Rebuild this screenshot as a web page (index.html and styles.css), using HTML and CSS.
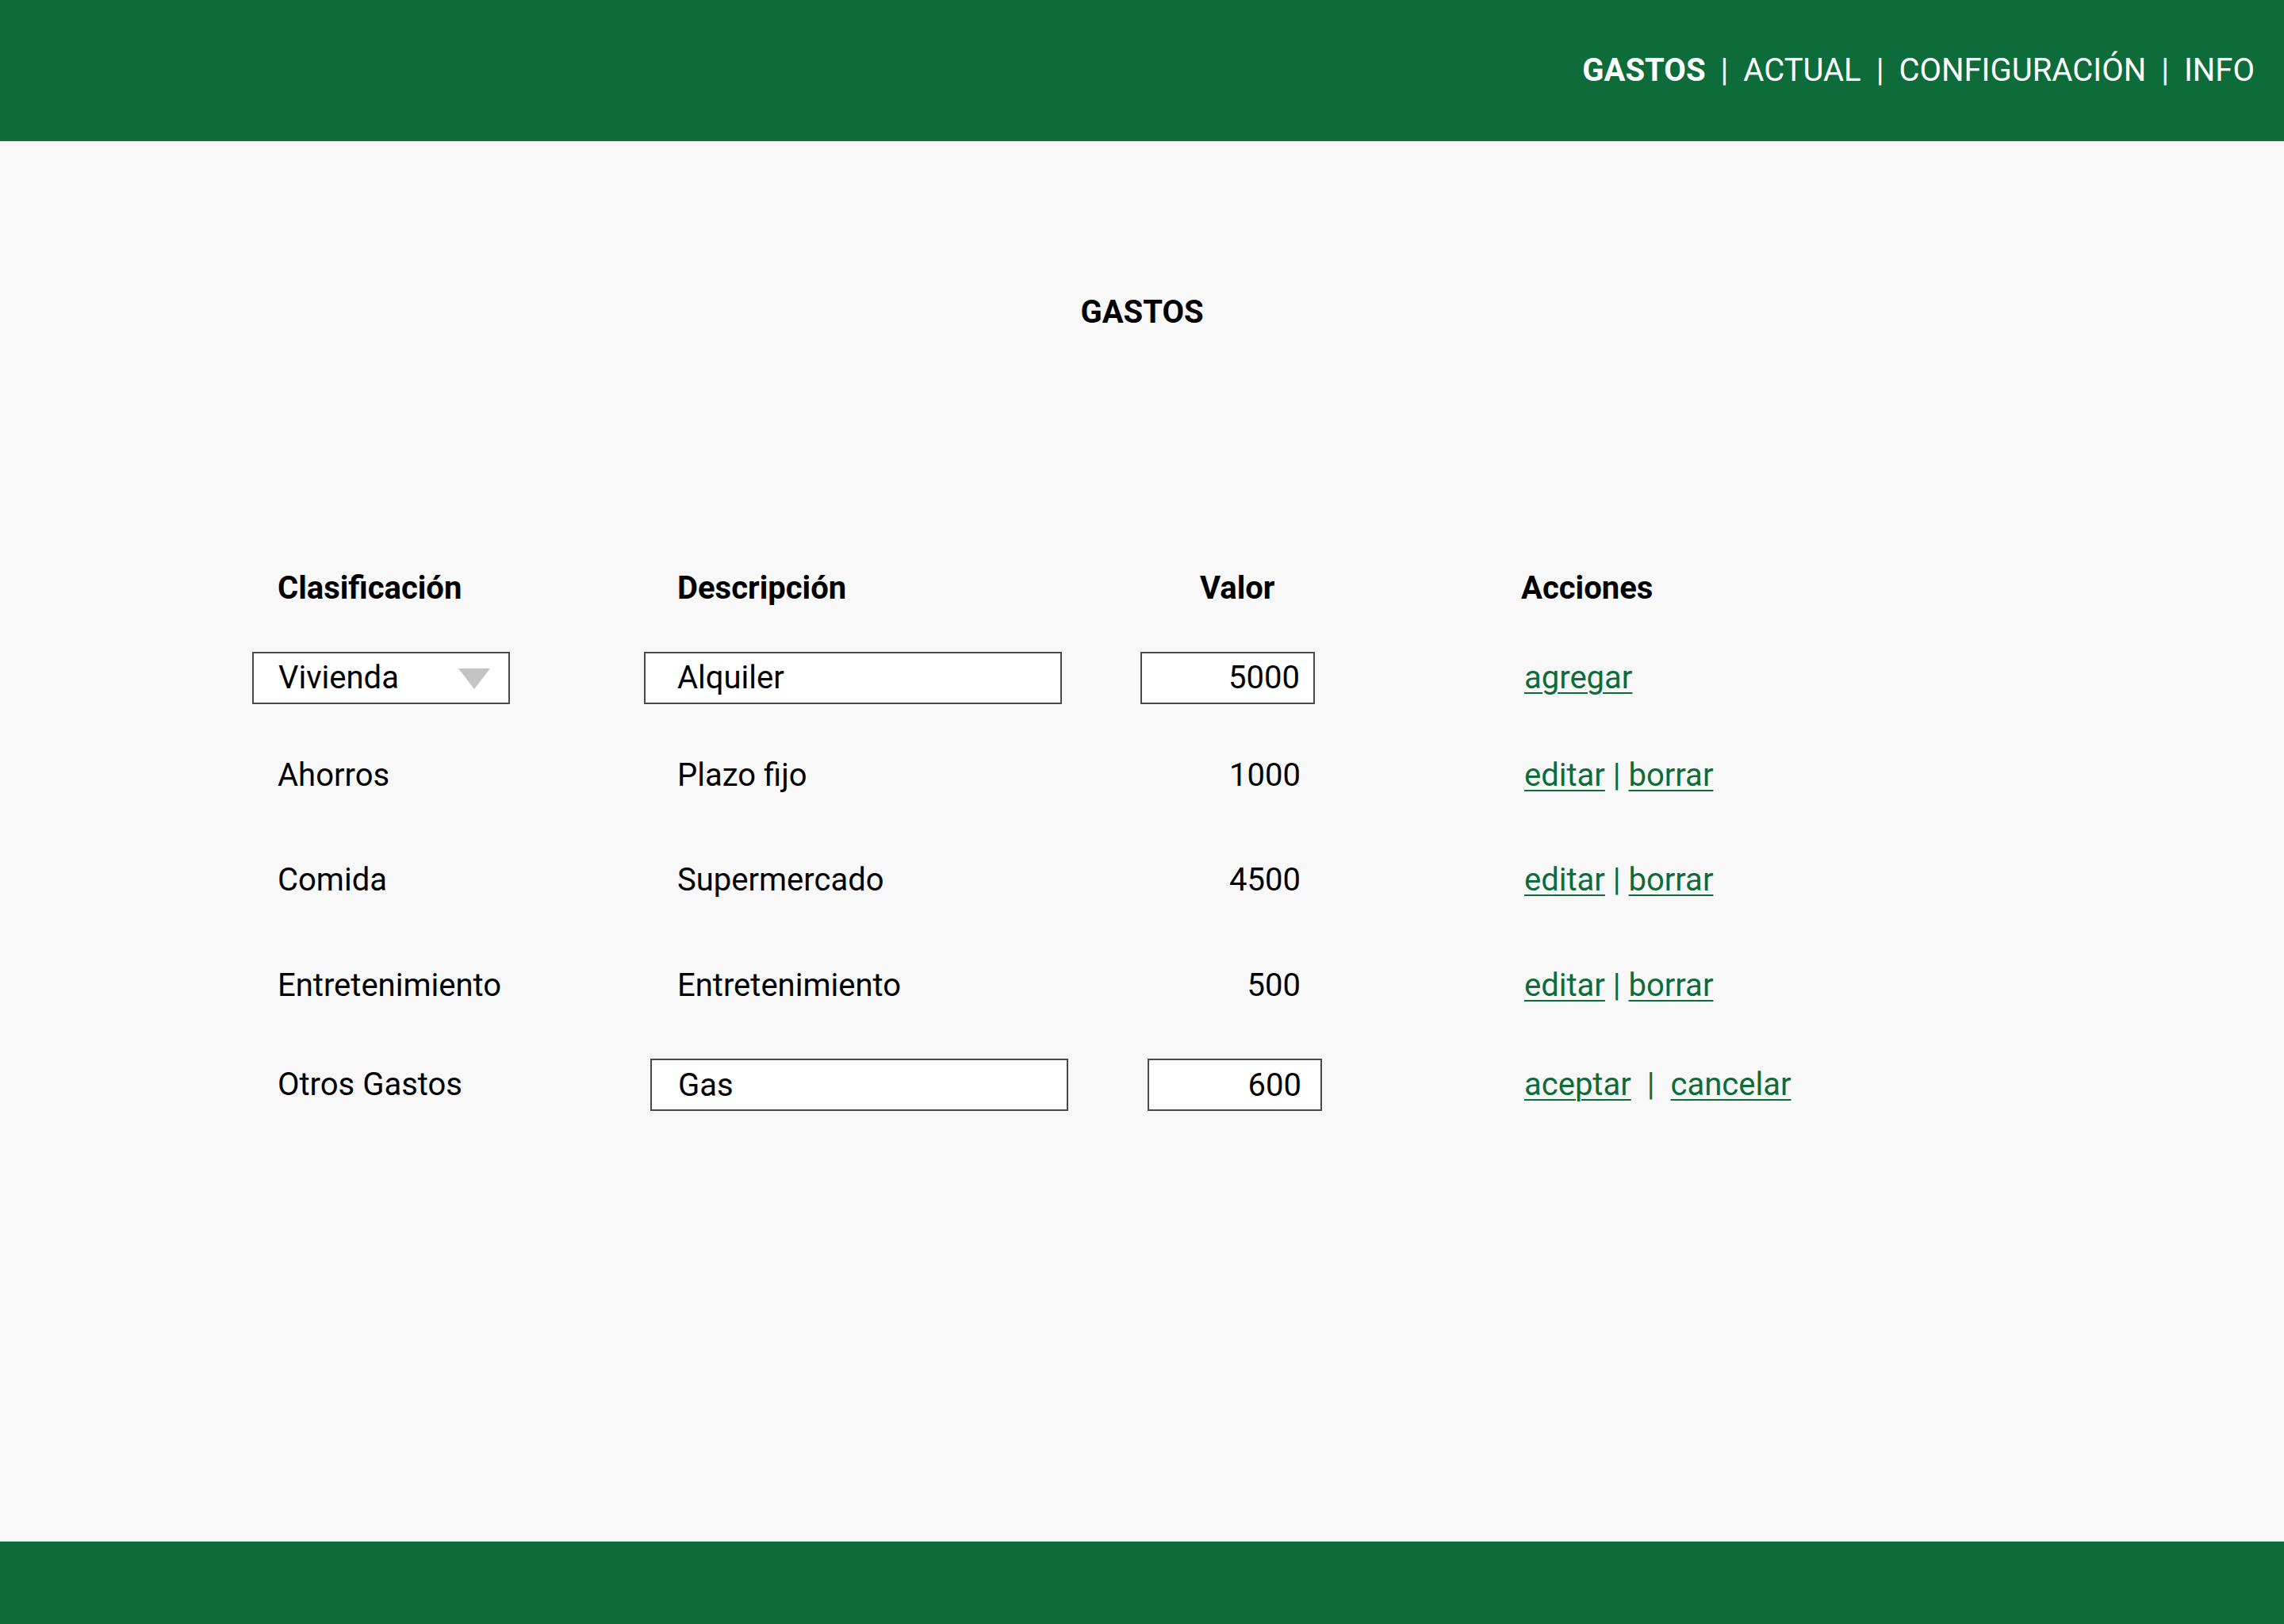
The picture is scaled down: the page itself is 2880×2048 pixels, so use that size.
FILE: index.html
```html
<!DOCTYPE html>
<html lang="es">
<head>
<meta charset="utf-8">
<title>Gastos</title>
<link rel="stylesheet" href="styles.css">
</head>
<body>
<header class="topbar">
  <nav class="nav">
    <a class="nav-item active">GASTOS</a>
    <span class="nav-sep">|</span>
    <a class="nav-item">ACTUAL</a>
    <span class="nav-sep">|</span>
    <a class="nav-item">CONFIGURACIÓN</a>
    <span class="nav-sep">|</span>
    <a class="nav-item">INFO</a>
  </nav>
</header>
<main class="main">
  <h1 class="title">GASTOS</h1>
  <div class="table">
    <div class="cell c1 head">Clasificación</div>
    <div class="cell c2 head">Descripción</div>
    <div class="cell c3 head head-valor">Valor</div>
    <div class="cell c4 head">Acciones</div>

    <div class="cell">
      <div class="select">
        <span>Vivienda</span>
        <svg class="caret" width="40" height="26" viewBox="0 0 40 26"><polygon points="0,0 40,0 20,26" fill="#c4c4c4"/></svg>
      </div>
    </div>
    <div class="cell"><input class="field field-desc" type="text" value="Alquiler"></div>
    <div class="cell"><input class="field field-val" type="text" value="5000"></div>
    <div class="cell c4"><span class="actions"><a class="link">agregar</a></span></div>

    <div class="cell c1">Ahorros</div>
    <div class="cell c2">Plazo fijo</div>
    <div class="cell c3"><span class="num">1000</span></div>
    <div class="cell c4"><span class="actions"><a class="link">editar</a> <span class="sep">|</span> <a class="link">borrar</a></span></div>

    <div class="cell c1">Comida</div>
    <div class="cell c2">Supermercado</div>
    <div class="cell c3"><span class="num">4500</span></div>
    <div class="cell c4"><span class="actions"><a class="link">editar</a> <span class="sep">|</span> <a class="link">borrar</a></span></div>

    <div class="cell c1">Entretenimiento</div>
    <div class="cell c2">Entretenimiento</div>
    <div class="cell c3"><span class="num">500</span></div>
    <div class="cell c4"><span class="actions"><a class="link">editar</a> <span class="sep">|</span> <a class="link">borrar</a></span></div>

    <div class="cell c1">Otros Gastos</div>
    <div class="cell"><input class="field field-desc shifted" type="text" value="Gas"></div>
    <div class="cell"><input class="field field-val shifted" type="text" value="600"></div>
    <div class="cell c4"><span class="actions"><a class="link">aceptar</a><span class="sep wide">|</span><a class="link">cancelar</a></span></div>
  </div>
</main>
<footer class="footer"></footer>
</body>
</html>
```

FILE: styles.css
```css
* { box-sizing: border-box; }

html, body {
  margin: 0;
  padding: 0;
}

body {
  background: #f8f8f8;
  font-family: Roboto, "Liberation Sans", Arial, sans-serif;
  font-size: 40px;
  color: #000;
  min-height: 100vh;
  display: flex;
  flex-direction: column;
}

.topbar {
  height: 178px;
  background: #0e6b3a;
  display: flex;
  align-items: center;
  justify-content: flex-end;
  padding-right: 37px;
  flex-shrink: 0;
}

.nav {
  display: flex;
  align-items: center;
  gap: 19px;
  color: #fff;
  font-size: 40px;
  line-height: 48px;
}

.nav-item {
  color: #fff;
  text-decoration: none;
}

.nav-item.active {
  font-weight: 700;
}

.nav-sep {
  color: #fff;
}

.main {
  flex: 1;
  padding-left: 318px;
}

.title {
  margin: 192px 0 0 -318px;
  font-size: 40px;
  line-height: 48px;
  font-weight: 700;
  text-align: center;
}

.table {
  margin-top: 268px;
  display: grid;
  grid-template-columns: 494px 626px 480px 1fr;
  grid-template-rows: 112px 113px 134px 130px 136px 114px;
  align-items: center;
  line-height: 48px;
}

.cell {
  display: flex;
  align-items: center;
}

.c1 { padding-left: 32px; }
.c2 { padding-left: 42px; }

.head {
  font-weight: 700;
}

.head-valor {
  padding-left: 75px;
}

.c4.head {
  padding-left: 0;
  color: #000;
}

.num {
  display: block;
  width: 220px;
  text-align: right;
  padding-right: 18px;
}

.select {
  width: 325px;
  height: 66px;
  border: 2px solid #4a4a4a;
  background: #fff;
  display: flex;
  align-items: center;
  justify-content: space-between;
  padding: 0 23px 0 31px;
}

.caret {
  display: block;
  margin-top: 2px;
}

.field {
  height: 66px;
  border: 2px solid #4a4a4a;
  border-radius: 0;
  background: #fff;
  font-family: Roboto, "Liberation Sans", Arial, sans-serif;
  font-size: 40px;
  color: #000;
  margin: 0;
  outline: none;
}

.field-desc {
  width: 527px;
  padding: 0 10px 0 40px;
}

.field-val {
  width: 220px;
  text-align: right;
  padding: 0 17px 0 10px;
}

.field-desc.shifted {
  margin-left: 8px;
  padding-left: 33px;
}

.field-val.shifted {
  margin-left: 9px;
  padding-right: 24px;
}

.c4 {
  padding-left: 4px;
}

.actions {
  color: #0e6b3a;
  white-space: pre;
}

.link {
  color: #0e6b3a;
  text-decoration: underline;
  text-underline-offset: 5px;
  text-decoration-thickness: 2px;
}

.sep {
  color: #0e6b3a;
}

.sep.wide {
  margin: 0 20px;
}

.footer {
  height: 104px;
  background: #0e6b3a;
  flex-shrink: 0;
}
```
